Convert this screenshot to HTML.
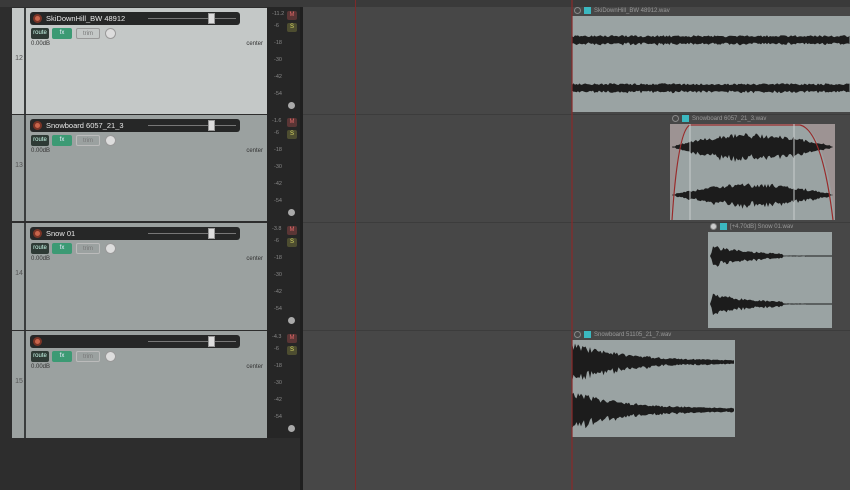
<!DOCTYPE html>
<html><head><meta charset="utf-8"><style>
*{margin:0;padding:0;box-sizing:border-box}
body{width:850px;height:490px;background:#2d2d2d;position:relative;overflow:hidden;font-family:"Liberation Sans",sans-serif}
.a{position:absolute}
.trk{position:absolute;left:12px;width:255px}
.num{position:absolute;left:2px;width:12px;top:0;bottom:0;background:inherit;border-right:2px solid #3a3d3d;font-size:7px;color:#555;text-align:center}
.pan{position:absolute;left:14px;right:0;top:0;bottom:0}
.nb{position:absolute;left:4px;top:4px;width:210px;height:13px;background:#262727;border-radius:3px}
.rec{position:absolute;left:3px;top:2px;width:9px;height:9px;border-radius:50%;background:#c9654c;border:2px solid #7a3426}
.nm{position:absolute;left:16px;top:2px;font-size:7.5px;color:#e8e8e8;white-space:nowrap}
.sl{position:absolute;left:118px;top:6px;width:88px;height:1px;background:#777}
.th{position:absolute;left:178px;top:1px;width:7px;height:11px;background:#ddd;border:1px solid #999}
.bt{position:absolute;top:20px;height:11px;border-radius:2px;font-size:6px;line-height:11px;text-align:center}
.db{position:absolute;left:5px;top:33px;font-size:6px;color:#333}
.ct{position:absolute;right:4px;top:33px;font-size:6px;color:#333}
.mt{position:absolute;left:267px;width:33px;background:#262626}
.ms{position:absolute;font-size:5.5px;color:#888}
.mb{position:absolute;left:20px;width:10px;height:9px;border-radius:2px;font-size:6px;text-align:center;line-height:9px}
.kn{position:absolute;left:21px;width:7px;height:7px;border-radius:50%;background:#aaa}
.hd{position:absolute;font-size:6px;color:#999;white-space:nowrap}
.ic{display:inline-block;width:7px;height:7px;background:#3bb8c0;vertical-align:middle;margin-right:3px}
.cb{display:inline-block;width:7px;height:7px;border:1px solid #888;border-radius:50%;vertical-align:middle;margin-right:3px}
</style></head><body>
<div class="a" style="left:303px;top:0;width:547px;height:490px;background:#474747"></div>
<div class="a" style="left:303px;top:0;width:547px;height:7px;background:#3a3a3a"></div>
<div class="a" style="left:303px;top:114px;width:547px;height:1px;background:#3c3c3c"></div>
<div class="a" style="left:303px;top:222px;width:547px;height:1px;background:#3c3c3c"></div>
<div class="a" style="left:303px;top:330px;width:547px;height:1px;background:#3c3c3c"></div>
<div class="a" style="left:300px;top:0;width:3px;height:490px;background:#1f1f1f"></div>
<div class="a" style="left:0;top:0;width:303px;height:7px;background:#3a3a3a"></div>

<div class="trk" style="top:8px;height:106px;background:#c4c8c7"><div class="num"><span style="position:relative;top:47px">12</span></div><div class="pan" style="background:#c4c8c7">
<div class="nb"><div class="rec"></div><div class="nm">SkiDownHill_BW 48912</div><div class="sl"></div><div class="th"></div></div>
<div class="bt" style="left:5px;width:18px;background:#2e3a35;color:#cfe">route</div><div class="bt" style="left:26px;width:20px;background:#3c9a74;color:#eef">fx</div><div class="bt" style="left:50px;width:24px;border:1px solid #999;color:#777">trim</div><div class="a" style="left:79px;top:20px;width:11px;height:11px;border-radius:50%;background:#ddd;border:1px solid #999"></div>
<div class="db">0.00dB</div><div class="ct">center</div></div></div>

<div class="trk" style="top:115px;height:106px;background:#9ba1a0"><div class="num"><span style="position:relative;top:47px">13</span></div><div class="pan" style="background:#9ba1a0">
<div class="nb"><div class="rec"></div><div class="nm">Snowboard 6057_21_3</div><div class="sl"></div><div class="th"></div></div>
<div class="bt" style="left:5px;width:18px;background:#2e3a35;color:#cfe">route</div><div class="bt" style="left:26px;width:20px;background:#3c9a74;color:#eef">fx</div><div class="bt" style="left:50px;width:24px;border:1px solid #bbb;color:#777">trim</div><div class="a" style="left:79px;top:20px;width:11px;height:11px;border-radius:50%;background:#ddd;border:1px solid #999"></div>
<div class="db">0.00dB</div><div class="ct">center</div></div></div>

<div class="trk" style="top:223px;height:107px;background:#9ba1a0"><div class="num"><span style="position:relative;top:47px">14</span></div><div class="pan" style="background:#9ba1a0">
<div class="nb"><div class="rec"></div><div class="nm">Snow 01</div><div class="sl"></div><div class="th"></div></div>
<div class="bt" style="left:5px;width:18px;background:#2e3a35;color:#cfe">route</div><div class="bt" style="left:26px;width:20px;background:#3c9a74;color:#eef">fx</div><div class="bt" style="left:50px;width:24px;border:1px solid #bbb;color:#777">trim</div><div class="a" style="left:79px;top:20px;width:11px;height:11px;border-radius:50%;background:#ddd;border:1px solid #999"></div>
<div class="db">0.00dB</div><div class="ct">center</div></div></div>

<div class="trk" style="top:331px;height:107px;background:#9ba1a0"><div class="num"><span style="position:relative;top:47px">15</span></div><div class="pan" style="background:#9ba1a0">
<div class="nb"><div class="rec"></div><div class="sl"></div><div class="th"></div></div>
<div class="bt" style="left:5px;width:18px;background:#2e3a35;color:#cfe">route</div><div class="bt" style="left:26px;width:20px;background:#3c9a74;color:#eef">fx</div><div class="bt" style="left:50px;width:24px;border:1px solid #bbb;color:#777">trim</div><div class="a" style="left:79px;top:20px;width:11px;height:11px;border-radius:50%;background:#ddd;border:1px solid #999"></div>
<div class="db">0.00dB</div><div class="ct">center</div></div></div>

<div class="mt" style="top:7px;height:431px"></div>
<div id="meters"></div>

<div class="a" style="left:355px;top:0;width:1px;height:490px;background:#7d2a2a"></div>
<svg class="a" style="left:0;top:0" width="850" height="490" id="sv">
<rect x="572" y="16" width="278" height="96" fill="#9aa3a3"/>
<rect x="670" y="124" width="165" height="96" fill="#9aa3a3"/>
<rect x="708" y="232" width="124" height="96" fill="#9aa3a3"/>
<rect x="572" y="340" width="163" height="97" fill="#9aa3a3"/>
<path d="M670 124 L670 220 Q680 130 690 124Z" fill="#a08888" opacity=".6"/>
<path d="M835 124 L835 220 Q825 130 800 124Z" fill="#a08888" opacity=".6"/>
<g id="w" fill="#1c1c1c"></g>
<path d="M672 220 Q678 130 690 125 L800 125 Q822 130 833 220" fill="none" stroke="#9a2a2a" stroke-width="1.2"/>
<line x1="690" y1="124" x2="690" y2="220" stroke="#c8cccc" stroke-width="1"/>
<line x1="794" y1="124" x2="794" y2="220" stroke="#c8cccc" stroke-width="1"/>
<line x1="572" y1="0" x2="572" y2="490" stroke="#8a2a2a" stroke-width="1.2"/>
</svg>
<div class="hd" style="left:574px;top:7px"><span class="cb"></span><span class="ic"></span>SkiDownHill_BW 48912.wav</div>
<div class="hd" style="left:672px;top:115px"><span class="cb"></span><span class="ic"></span>Snowboard 6057_21_3.wav</div>
<div class="hd" style="left:710px;top:223px"><span class="cb" style="background:#ccc"></span><span class="ic"></span>[+4.70dB] Snow 01.wav</div>
<div class="hd" style="left:574px;top:331px"><span class="cb"></span><span class="ic"></span>Snowboard 51105_21_7.wav</div>
<script>
var m='',tops=[8,115,223,331],vals=['-11.2','-1.6','-3.8','-4.3'];
tops.forEach(function(t,i){
m+='<div class="ms" style="left:272px;top:'+(t+3)+'px">'+vals[i]+'</div>';
m+='<div class="mb" style="left:287px;top:'+(t+3)+'px;background:#5a3535;color:#d66">M</div>';
m+='<div class="mb" style="left:287px;top:'+(t+15)+'px;background:#4d4d30;color:#dd6">S</div>';
['-6','-18','-30','-42','-54'].forEach(function(s,j){m+='<div class="ms" style="left:274px;top:'+(t+15+j*17)+'px">'+s+'</div>';});
m+='<div class="kn" style="left:288px;top:'+(t+94)+'px"></div>';
});
document.getElementById('meters').innerHTML=m;
function r(){return Math.random();}
function wave(x0,x1,cy,amp){var up=[],dn=[];for(var x=x0;x<=x1;x+=1.5){var a=amp((x-x0)/(x1-x0))*(0.7+0.5*r());up.push(x+','+(cy-a).toFixed(1));dn.unshift(x+','+(cy+a*(0.8+0.4*r())).toFixed(1));}
return '<polygon points="'+up.concat(dn).join(' ')+'"/>';}
var g='';
g+=wave(572,850,40,function(){return 4;});g+=wave(572,850,88,function(){return 4;});
function bell(p){return p<0.02||p>0.98?0.5:Math.sin(Math.PI*p)*11+1;}
g+=wave(672,833,147,bell);g+=wave(672,833,195,function(p){return bell(p)*0.85;});
function dec(p){return p>0.75?0.5:(p<0.03?p*250:9*Math.exp(-p*2.5)+1);}
g+=wave(710,806,256,dec);g+=wave(710,806,304,dec);
function dec2(p){return 16*Math.exp(-p*3)+1;}
g+=wave(572,735,362,dec2);g+=wave(572,735,410,dec2);
g+='<line x1="806" y1="256" x2="832" y2="256" stroke="#1c1c1c"/><line x1="806" y1="304" x2="832" y2="304" stroke="#1c1c1c"/>';
document.getElementById('w').innerHTML=g;
</script>
</body></html>
